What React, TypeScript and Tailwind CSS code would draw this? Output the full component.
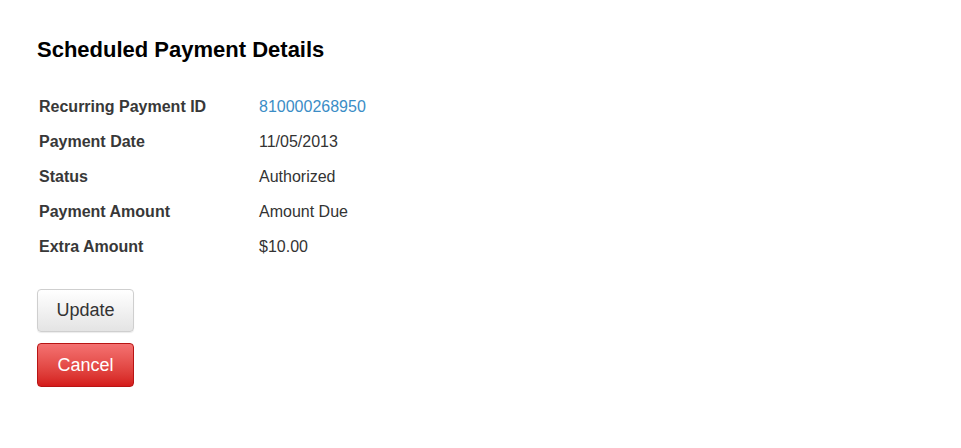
export default function App() {
  const rows: [string, string, boolean?][] = [
    ["Recurring Payment ID", "810000268950", true],
    ["Payment Date", "11/05/2013"],
    ["Status", "Authorized"],
    ["Payment Amount", "Amount Due"],
    ["Extra Amount", "$10.00"],
  ];
  return (
    <div
      className="w-[961px] h-[448px] bg-white pl-[37px] pt-[37px]"
      style={{ fontFamily: '"Liberation Sans", Arial, sans-serif' }}
    >
      <h1 className="text-[22px] leading-[26px] font-bold text-black m-0">
        Scheduled Payment Details
      </h1>
      <div className="mt-[26px] flex flex-col">
        {rows.map(([label, value, link]) => (
          <div key={label} className="h-[35px] flex items-center text-[16px]">
            <div className="w-[222px] pl-[2px] font-bold text-[#383838]">{label}</div>
            <div className={link ? "text-[#3b8dc6]" : "text-[#333333]"}>{value}</div>
          </div>
        ))}
      </div>
      <div className="mt-[25px] flex flex-col gap-[11px]">
        <button className="w-[97px] h-[43px] rounded-[4px] border border-[#cfcfcf] bg-gradient-to-b from-[#ffffff] to-[#e4e4e4] text-[18px] text-[#333333] shadow-[0_1px_1px_rgba(0,0,0,0.08)]">
          Update
        </button>
        <button className="w-[97px] h-[44px] rounded-[4px] border border-[#b81414] bg-gradient-to-b from-[#f47171] to-[#d41a1a] text-[18px] text-white">
          Cancel
        </button>
      </div>
    </div>
  );
}
